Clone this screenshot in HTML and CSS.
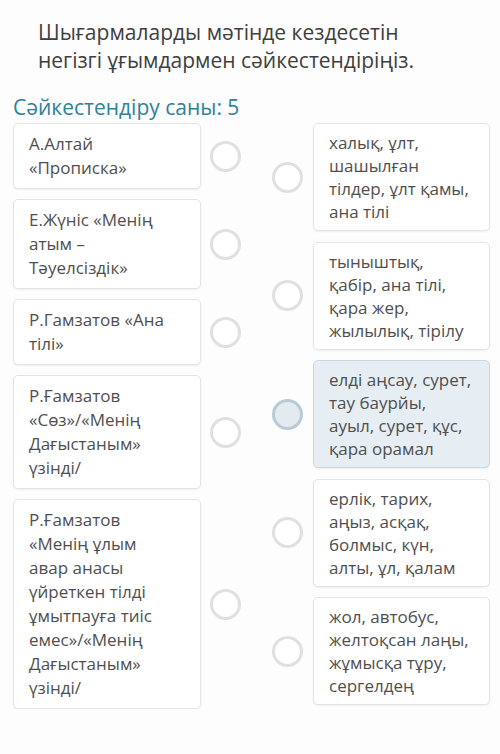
FILE: index.html
```html
<!DOCTYPE html>
<html lang="kk">
<head>
  <meta charset="UTF-8" />
  <meta name="viewport" content="width=device-width, initial-scale=1.0"/>
  <title>Сәйкестендіру</title>
  <link rel="stylesheet" href="styles.css">
</head>
<body>

  <h1 class="question">Шығармаларды мәтінде кездесетін негізгі ұғымдармен сәйкестендіріңіз.</h1>

  <div class="count">Сәйкестендіру саны: 5</div>

  <div class="match">
    <div class="col col-left">
      <div class="row">
        <div class="card">А.Алтай<br>«Прописка»</div>
        <span class="dot"></span>
      </div>
      <div class="row">
        <div class="card">Е.Жүніс «Менің<br>атым –<br>Тәуелсіздік»</div>
        <span class="dot"></span>
      </div>
      <div class="row">
        <div class="card">Р.Гамзатов «Ана<br>тілі»</div>
        <span class="dot"></span>
      </div>
      <div class="row">
        <div class="card">Р.Ғамзатов<br>«Сөз»/«Менің<br>Дағыстаным»<br>үзінді/</div>
        <span class="dot"></span>
      </div>
      <div class="row">
        <div class="card">Р.Ғамзатов<br>«Менің ұлым<br>авар анасы<br>үйреткен тілді<br>ұмытпауға тиіс<br>емес»/«Менің<br>Дағыстаным»<br>үзінді/</div>
        <span class="dot"></span>
      </div>
    </div>

    <div class="col col-right">
      <div class="row">
        <span class="dot"></span>
        <div class="card">халық, ұлт,<br>шашылған<br>тілдер, ұлт қамы,<br>ана тілі</div>
      </div>
      <div class="row">
        <span class="dot"></span>
        <div class="card">тыныштық,<br>қабір, ана тілі,<br>қара жер,<br>жылылық, тірілу</div>
      </div>
      <div class="row active">
        <span class="dot"></span>
        <div class="card">елді аңсау, сурет,<br>тау баурйы,<br>ауыл, сурет, құс,<br>қара орамал</div>
      </div>
      <div class="row">
        <span class="dot"></span>
        <div class="card">ерлік, тарих,<br>аңыз, асқақ,<br>болмыс, күн,<br>алты, ұл, қалам</div>
      </div>
      <div class="row">
        <span class="dot"></span>
        <div class="card">жол, автобус,<br>желтоқсан лаңы,<br>жұмысқа тұру,<br>сергелдең</div>
      </div>
    </div>
  </div>

</body>
</html>
```

FILE: styles.css
```css
* {
  box-sizing: border-box;
}

body {
  font-family: "Open Sans", Arial, sans-serif;
  margin: 0;
  background-color: #fdfdfd;
  color: #4f4f4f;
  padding: 18px 10px 0 13px;
}

.question {
  margin: 0 0 0 25px;
  font-size: 21px;
  font-weight: normal;
  line-height: 28px;
  color: #3f3f3f;
  width: 420px;
}

.count {
  margin-top: 20px;
  font-size: 21px;
  line-height: 26px;
  color: #2f8298;
}

.match {
  display: flex;
  align-items: flex-start;
  gap: 31px;
  margin-top: 3px;
}

.col {
  display: flex;
  flex-direction: column;
  gap: 10px;
}

.col-left {
  width: 228px;
}

.col-right {
  width: 218px;
  gap: 10.5px;
}

.row {
  display: flex;
  align-items: center;
  gap: 9px;
}

.col-right .row {
  gap: 10px;
}

.card {
  flex: 1;
  background-color: #fff;
  border: 1px solid #e4e4e4;
  border-radius: 5px;
  box-shadow: 0 1px 2px rgba(0,0,0,0.06);
  font-size: 17px;
  line-height: 24px;
  padding: 8px 15px;
}

.col-right .card {
  line-height: 23px;
  padding: 7px 15px;
}

.dot {
  flex: none;
  width: 31px;
  height: 31px;
  border: 3px solid #e0e0e0;
  border-radius: 50%;
  background-color: #fff;
}

.active .card {
  background-color: #e7eef3;
  border-color: #cbd8e0;
}

.active .dot {
  background-color: #e3ebf0;
  border-color: #b9cbd6;
}
```
